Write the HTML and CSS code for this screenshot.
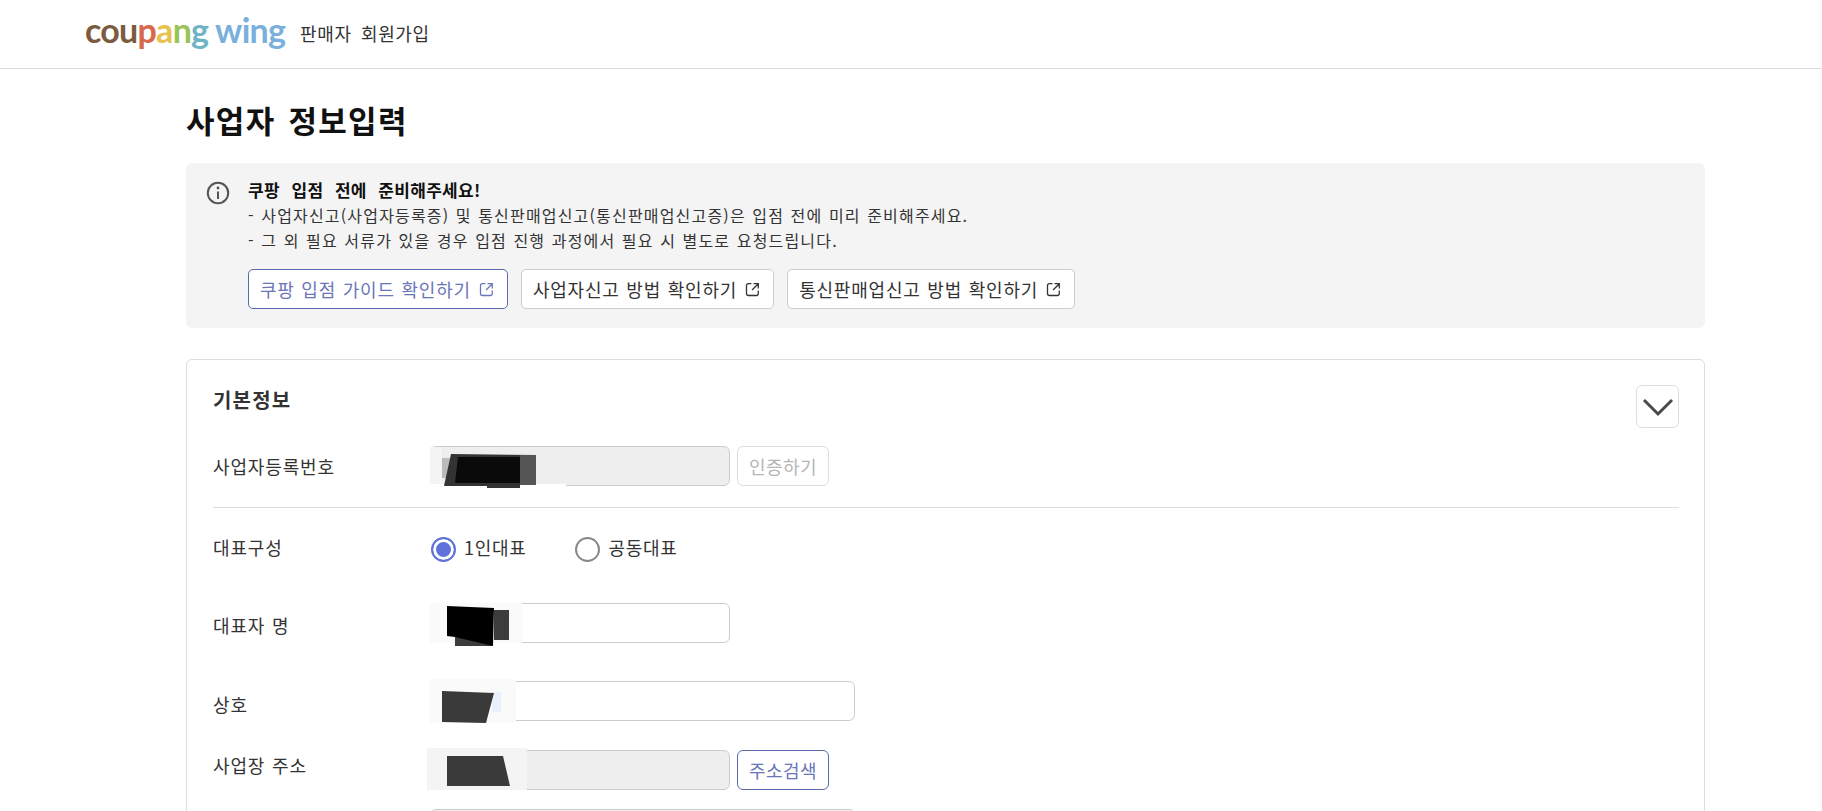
FILE: index.html
```html
<!DOCTYPE html>
<html lang="ko">
<head>
<meta charset="utf-8">
<title>판매자 회원가입</title>
<link rel="stylesheet" href="styles.css">
</head>
<body>
<header class="topbar">
  <div class="logo"><span class="c-brown">cou</span><span class="c-red">p</span><span class="c-yellow">a</span><span class="c-green">n</span><span class="c-teal">g</span> <span class="c-blue">wing</span></div>
  <span class="topbar-title">판매자 회원가입</span>
</header>
<main class="content">
  <h1 class="page-title">사업자 정보입력</h1>
  <section class="notice">
    <svg class="info-icon" viewBox="0 0 24 24" width="24" height="24" fill="none" stroke="#555" stroke-width="2"><circle cx="12" cy="12" r="10.2"/><path d="M12 10.5v7.5" stroke-width="2"/><circle cx="12" cy="7" r="1.4" fill="#555" stroke="none"/></svg>
    <div class="notice-body">
      <h2 class="notice-title">쿠팡 입점 전에 준비해주세요!</h2>
      <p class="notice-line">- 사업자신고(사업자등록증) 및 통신판매업신고(통신판매업신고증)은 입점 전에 미리 준비해주세요.</p>
      <p class="notice-line">- 그 외 필요 서류가 있을 경우 입점 진행 과정에서 필요 시 별도로 요청드립니다.</p>
      <div class="guide-links">
        <a class="guide-btn guide-primary">쿠팡 입점 가이드 확인하기<svg class="ext" viewBox="0 0 14 14" fill="none" stroke="currentColor" stroke-width="1.2"><path d="M6 1.6H3.2A1.8 1.8 0 0 0 1.4 3.4v7.4a1.8 1.8 0 0 0 1.8 1.8h7.4a1.8 1.8 0 0 0 1.8-1.8V8M8 1.6h4.4V6M12.2 1.8 6.6 7.4"/></svg></a>
        <a class="guide-btn">사업자신고 방법 확인하기<svg class="ext" viewBox="0 0 14 14" fill="none" stroke="currentColor" stroke-width="1.2"><path d="M6 1.6H3.2A1.8 1.8 0 0 0 1.4 3.4v7.4a1.8 1.8 0 0 0 1.8 1.8h7.4a1.8 1.8 0 0 0 1.8-1.8V8M8 1.6h4.4V6M12.2 1.8 6.6 7.4"/></svg></a>
        <a class="guide-btn">통신판매업신고 방법 확인하기<svg class="ext" viewBox="0 0 14 14" fill="none" stroke="currentColor" stroke-width="1.2"><path d="M6 1.6H3.2A1.8 1.8 0 0 0 1.4 3.4v7.4a1.8 1.8 0 0 0 1.8 1.8h7.4a1.8 1.8 0 0 0 1.8-1.8V8M8 1.6h4.4V6M12.2 1.8 6.6 7.4"/></svg></a>
      </div>
    </div>
  </section>
  <section class="card">
    <div class="card-head">
      <h2 class="card-title">기본정보</h2>
      <button class="toggle" aria-label="접기"><svg viewBox="0 0 32 20" width="32" height="20" fill="none" stroke="#4a4a4a" stroke-width="3"><path d="M2 3l14 14L30 3"/></svg></button>
    </div>
    <div class="row row-biz">
      <label class="row-label">사업자등록번호</label>
      <div class="field field-sm is-disabled">
        <svg class="redact" width="150" height="50" viewBox="0 0 150 50"><path d="M0 38h136v4H0z" fill="#fff"/><path d="M0 1h12v37H0z" fill="#f4f4f4"/><path d="M12 12h10v20H12z" fill="#bbb"/><path d="M21 8l85 1v30H90v3H57v-2H14z" fill="#333"/><path d="M90 9h16v30H90z" fill="#555"/><path d="M28 11h62v26H25z" fill="#0a0a0a"/></svg>
      </div>
      <button class="side-btn side-muted">인증하기</button>
    </div>
    <hr class="divider">
    <div class="row row-radio">
      <label class="row-label">대표구성</label>
      <div class="radios">
        <span class="radio-item"><span class="radio radio-on"></span><span class="radio-text">1인대표</span></span>
        <span class="radio-item"><span class="radio"></span><span class="radio-text">공동대표</span></span>
      </div>
    </div>
    <div class="row row-name">
      <label class="row-label">대표자 명</label>
      <div class="field field-sm">
        <svg class="redact" width="100" height="50" viewBox="0 0 100 50"><path d="M0 0h92v40H0z" fill="#fafafa"/><path d="M64 7h15v30H64zM25 33h38v10H25z" fill="#3c3c3c"/><path d="M17 3l47 2-1 38-38-9-8-1z" fill="#000"/></svg>
      </div>
    </div>
    <div class="row row-shop">
      <label class="row-label">상호</label>
      <div class="field field-lg">
        <svg class="redact" width="100" height="50" viewBox="0 0 100 50"><path d="M0-2h86v44H0z" fill="#fafafa"/><path d="M62 11h9v20h-9z" fill="#e8f1fb"/><path d="M12 10l52 2-8 30-44-1z" fill="#3a3a3a"/></svg>
      </div>
    </div>
    <div class="row row-addr">
      <label class="row-label">사업장 주소</label>
      <div class="field field-sm is-disabled">
        <svg class="redact" width="110" height="50" viewBox="0 0 110 50"><path d="M-3-2h100v42H-3z" fill="#f4f4f4"/><path d="M17 6h56l7 30H17z" fill="#3a3a3a"/></svg>
      </div>
      <button class="side-btn side-primary">주소검색</button>
    </div>
    <div class="row row-next">
      <div class="row-label"></div>
      <div class="field field-lg is-disabled"></div>
    </div>
  </section>
</main>
</body>
</html>
```
FILE: styles.css
```css
* { box-sizing: border-box; }
html, body { margin: 0; height: 100%; overflow: hidden; background: #fff; }
body { font-family: "Noto Sans CJK KR", "Noto Sans", sans-serif; color: #222; }

.topbar { height: 69px; border-bottom: 1px solid #ddd; display: flex; align-items: center; padding-left: 85px; }
.logo { font-family: Lato, sans-serif; font-weight: 700; font-size: 34px; line-height: 1; letter-spacing: -.75px; word-spacing: 0; width: 215px; white-space: nowrap; position: relative; top: -4px; }
.c-brown { color: #7d5b40; }
.c-red { color: #d8674c; }
.c-yellow { color: #e9c14f; }
.c-green { color: #98c457; }
.c-teal { color: #6fb4c4; }
.c-blue { color: #79b0dc; }
.topbar-title { font-size: 18px; color: #333; word-spacing: 3.6px; letter-spacing: .65px; font-weight: 400; position: relative; top: -1px; }

.content { padding-left: 186px; width: 1705px; }
.page-title { margin: 33px 0 0; font-size: 31px; line-height: 36px; font-weight: 700; color: #111; letter-spacing: 1.3px; word-spacing: 3px; }

.notice { margin-top: 25px; height: 165px; background: #f4f4f4; border-radius: 6px; padding: 14px 0 0 20px; display: flex; gap: 18px; }
.info-icon { margin-top: 4px; flex: none; }
.notice-title { margin: 0; font-size: 17px; line-height: 25px; font-weight: 700; color: #111; letter-spacing: .3px; word-spacing: 6.5px; }
.notice-line { margin: 0; position: relative; top: 1px; font-size: 16px; line-height: 25px; color: #333; word-spacing: .84px; letter-spacing: 1.18px; }
.guide-links { margin-top: 17px; display: flex; gap: 13px; }
.guide-btn { height: 40px; display: inline-flex; align-items: center; padding: 0 13px 0 11px; background: #fff; border: 1px solid #ccc; border-radius: 5px; font-size: 18px; color: #333; word-spacing: .8px; letter-spacing: .8px; }
.guide-primary { border-color: #5a68ad; color: #6a76b8; }
.ext { width: 15px; height: 15px; margin-left: 8px; }

.card { margin-top: 31px; height: 700px; border: 1px solid #ddd; border-radius: 6px; padding: 25px 25px 0 26px; }
.card-head { display: flex; justify-content: space-between; height: 61px; }
.card-title { margin: 0; font-size: 20px; line-height: 30px; font-weight: 700; color: #333; letter-spacing: 1.2px; }
.toggle { width: 43px; height: 43px; background: #fff; border: 1px solid #ddd; border-radius: 6px; display: flex; align-items: center; justify-content: center; padding: 0; }

.row { display: flex; }
.row-label { width: 217px; flex: none; font-size: 18px; color: #333; line-height: 24px; letter-spacing: .85px; word-spacing: 1px; }
.field { position: relative; height: 40px; background: #fff; border: 1px solid #ccc; border-radius: 6px; }
.field-sm { width: 300px; }
.field-lg { width: 425px; }
.is-disabled { background: #eee; }
.redact { position: absolute; left: -1px; top: -1px; overflow: visible; }

.side-btn { width: 92px; height: 40px; margin-left: 7px; padding: 0; background: #fff; border: 1px solid #ddd; border-radius: 6px; font: inherit; font-size: 18px; letter-spacing: .5px; }
.side-muted { color: #b5b5b5; }
.side-primary { border-color: #5a68ad; color: #6a76b8; }

.row-biz { align-items: center; }
.divider { margin: 21px 0 0; border: 0; border-top: 1px solid #ddd; }
.row-radio { margin-top: 26px; height: 30px; align-items: center; }
.row-radio .row-label { margin-top: -4px; }
.radios { display: flex; gap: 49px; margin-left: 1px; }
.radio-item { display: inline-flex; align-items: center; gap: 8px; font-size: 18px; color: #333; letter-spacing: .7px; }
.radio-text { margin-top: -4px; }
.radio { width: 25px; height: 25px; border: 2px solid #888; border-radius: 50%; background: #fff; display: inline-block; }
.radio-on { border-color: #5f72d9; box-shadow: inset 0 0 0 3px #fff; background: #5f72d9; }
.row-name { margin-top: 39px; align-items: center; }
.row-name .row-label { margin-top: 4px; }
.row-shop { margin-top: 38px; align-items: center; }
.row-shop .row-label { margin-top: 6px; }
.row-addr { margin-top: 29px; align-items: flex-start; }
.row-addr .row-label { margin-top: 3px; }
.row-next { margin-top: 19px; }
```
